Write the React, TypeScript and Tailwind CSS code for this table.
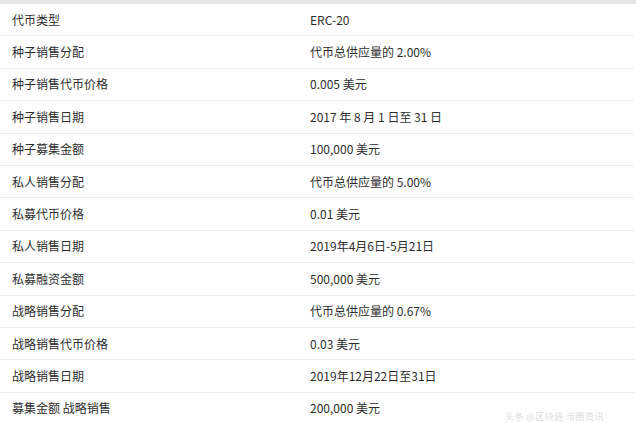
import React from 'react';

const ROWS: [string, string][] = [
  ['代币类型', 'ERC-20'],
  ['种子销售分配', '代币总供应量的 2.00%'],
  ['种子销售代币价格', '0.005 美元'],
  ['种子销售日期', '2017 年 8 月 1 日至 31 日'],
  ['种子募集金额', '100,000 美元'],
  ['私人销售分配', '代币总供应量的 5.00%'],
  ['私募代币价格', '0.01 美元'],
  ['私人销售日期', '2019年4月6日-5月21日'],
  ['私募融资金额', '500,000 美元'],
  ['战略销售分配', '代币总供应量的 0.67%'],
  ['战略销售代币价格', '0.03 美元'],
  ['战略销售日期', '2019年12月22日至31日'],
  ['募集金额 战略销售', '200,000 美元'],
];

export default function App() {
  return (
    <div
      className="relative w-[640px] h-[423px] overflow-hidden bg-white text-[12px] text-[#2e2e2e]"
      style={{ fontFamily: '"Noto Sans CJK SC", "Noto Sans", sans-serif' }}
    >
      <div className="w-[636px] h-[4px] bg-[#e6e6e6]" />
      <div className="w-[634px]">
        {ROWS.map(([label, value]) => (
          <div key={label} className="flex items-center h-[32.4px] border-b border-[#ececec]">
            <div className="w-[310px] pl-3">{label}</div>
            <div>{value}</div>
          </div>
        ))}
      </div>
      <div className="absolute left-[505px] bottom-0 text-[9px] leading-[12px] text-[#dcdcdc] tracking-wider">
        头条 @区块链 币圈资讯
      </div>
    </div>
  );
}
